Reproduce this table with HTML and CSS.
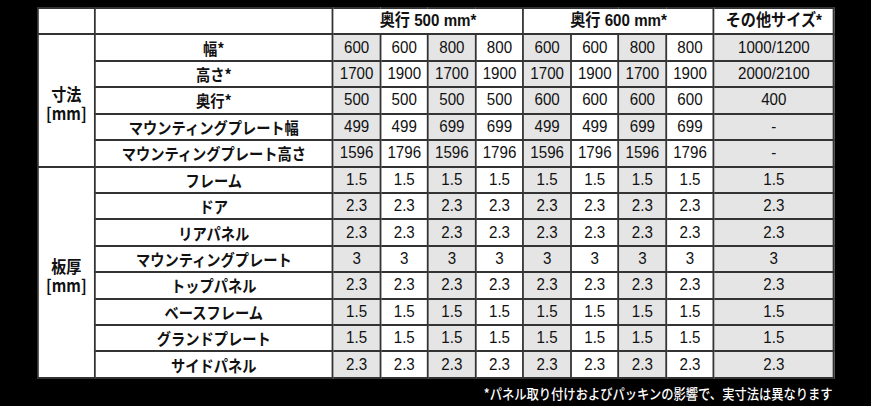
FILE: index.html
```html
<!DOCTYPE html>
<html lang="ja">
<head>
<meta charset="utf-8">
<link rel="stylesheet" href="styles.css">
</head>
<body>
<div class="page">
<div class="sheet">
<table class="spec">
<colgroup>
<col class="c-group"><col class="c-label">
<col class="c-d"><col class="c-d"><col class="c-d"><col class="c-d">
<col class="c-d"><col class="c-d"><col class="c-d"><col class="c-d">
<col class="c-other">
</colgroup>
<thead>
<tr>
<th></th><th></th>
<th colspan="4" class="head">奥行 500 mm*</th>
<th colspan="4" class="head">奥行 600 mm*</th>
<th class="head">その他サイズ*</th>
</tr>
</thead>
<tbody>
<tr><th rowspan="5" class="group"><span class="gl">寸法</span><span class="gl">[mm]</span></th><th class="label">幅*</th>
<td class="g">600</td><td>600</td><td class="g">800</td><td>800</td><td class="g">600</td><td>600</td><td class="g">800</td><td>800</td><td class="g">1000/1200</td></tr>
<tr><th class="label">高さ*</th>
<td class="g">1700</td><td>1900</td><td class="g">1700</td><td>1900</td><td class="g">1700</td><td>1900</td><td class="g">1700</td><td>1900</td><td class="g">2000/2100</td></tr>
<tr><th class="label">奥行*</th>
<td class="g">500</td><td>500</td><td class="g">500</td><td>500</td><td class="g">600</td><td>600</td><td class="g">600</td><td>600</td><td class="g">400</td></tr>
<tr><th class="label">マウンティングプレート幅</th>
<td class="g">499</td><td>499</td><td class="g">699</td><td>699</td><td class="g">499</td><td>499</td><td class="g">699</td><td>699</td><td class="g">-</td></tr>
<tr><th class="label">マウンティングプレート高さ</th>
<td class="g">1596</td><td>1796</td><td class="g">1596</td><td>1796</td><td class="g">1596</td><td>1796</td><td class="g">1596</td><td>1796</td><td class="g">-</td></tr>
<tr><th rowspan="8" class="group"><span class="gl">板厚</span><span class="gl">[mm]</span></th><th class="label">フレーム</th>
<td class="g">1.5</td><td>1.5</td><td class="g">1.5</td><td>1.5</td><td class="g">1.5</td><td>1.5</td><td class="g">1.5</td><td>1.5</td><td class="g">1.5</td></tr>
<tr><th class="label">ドア</th>
<td class="g">2.3</td><td>2.3</td><td class="g">2.3</td><td>2.3</td><td class="g">2.3</td><td>2.3</td><td class="g">2.3</td><td>2.3</td><td class="g">2.3</td></tr>
<tr><th class="label">リアパネル</th>
<td class="g">2.3</td><td>2.3</td><td class="g">2.3</td><td>2.3</td><td class="g">2.3</td><td>2.3</td><td class="g">2.3</td><td>2.3</td><td class="g">2.3</td></tr>
<tr><th class="label">マウンティングプレート</th>
<td class="g">3</td><td>3</td><td class="g">3</td><td>3</td><td class="g">3</td><td>3</td><td class="g">3</td><td>3</td><td class="g">3</td></tr>
<tr><th class="label">トップパネル</th>
<td class="g">2.3</td><td>2.3</td><td class="g">2.3</td><td>2.3</td><td class="g">2.3</td><td>2.3</td><td class="g">2.3</td><td>2.3</td><td class="g">2.3</td></tr>
<tr><th class="label">ベースフレーム</th>
<td class="g">1.5</td><td>1.5</td><td class="g">1.5</td><td>1.5</td><td class="g">1.5</td><td>1.5</td><td class="g">1.5</td><td>1.5</td><td class="g">1.5</td></tr>
<tr><th class="label">グランドプレート</th>
<td class="g">1.5</td><td>1.5</td><td class="g">1.5</td><td>1.5</td><td class="g">1.5</td><td>1.5</td><td class="g">1.5</td><td>1.5</td><td class="g">1.5</td></tr>
<tr><th class="label">サイドパネル</th>
<td class="g">2.3</td><td>2.3</td><td class="g">2.3</td><td>2.3</td><td class="g">2.3</td><td>2.3</td><td class="g">2.3</td><td>2.3</td><td class="g">2.3</td></tr>
</tbody>
</table>
<p class="note">*パネル取り付けおよびパッキンの影響で、実寸法は異なります</p>
</div>
</div>
</body>
</html>
```
FILE: styles.css
```css
html, body {
  margin: 0;
  padding: 0;
  background: #000;
  overflow: hidden;
}
.page {
  padding: 7px 0 0 37px;
}
.sheet {
  width: 896px;
  display: flex;
  flex-direction: column;
  transform: scaleX(0.89);
  transform-origin: 0 0;
}
.spec {
  border-collapse: collapse;
  table-layout: fixed;
  width: 896px;
  background: #fff;
  color: #111;
  font-family: "Liberation Sans", Arial, sans-serif;
  font-size: 17px;
}
.c-group { width: 64px; }
.c-label { width: 267.4px; }
.c-d { width: 53.5px; }
.c-other { width: 134.8px; }
.spec tr { height: 26.43px; }
.spec th, .spec td {
  border: 2px solid #333;
  padding: 0;
  text-align: center;
  vertical-align: middle;
  line-height: 20px;
}
.spec td { font-weight: 400; }
.spec td.g { background: #e5e5e5; }
.spec th {
  font-family: "Noto Sans CJK JP", "Liberation Sans", sans-serif;
  font-weight: 700;
  font-size: 16px;
}
.spec th.head {
  font-family: "Liberation Sans", "Noto Sans CJK JP", sans-serif;
  font-size: 17px;
}
.spec th.group {
  font-size: 17px;
  padding-top: 6px;
}
.gl {
  display: block;
  line-height: 19px;
}
.note {
  margin: 5px 2px 0 0;
  color: #fff;
  font-family: "Noto Sans CJK JP", sans-serif;
  font-size: 13.8px;
  font-weight: 500;
  text-align: right;
  line-height: 18px;
}
```
